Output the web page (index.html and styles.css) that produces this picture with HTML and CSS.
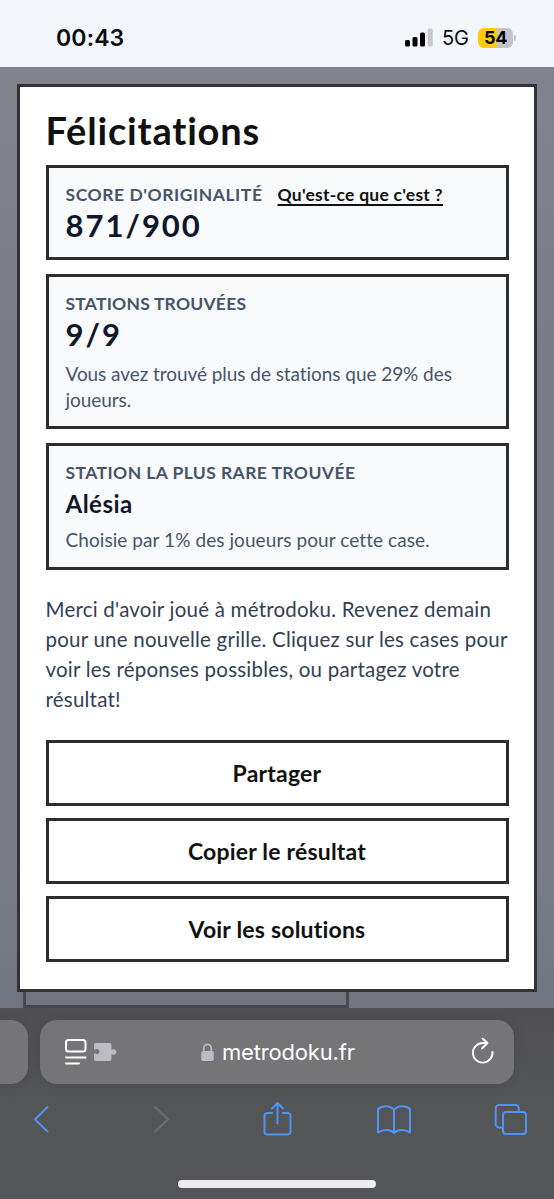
FILE: index.html
```html
<!DOCTYPE html>
<html lang="fr">
<head>
    <meta charset="UTF-8">
    <meta name="viewport" content="width=device-width, initial-scale=1.0">
    <title>métrodoku</title>
    <link rel="stylesheet" href="styles.css">
</head>
<body>
    <header class="status-bar">
        <span class="time">00:43</span>
        <div class="status-icons">
            <svg class="signal" width="28" height="20" viewBox="0 0 28 20">
                <rect x="0" y="12" width="5" height="6.500" rx="1.500"/>
                <rect x="7.500" y="9" width="5" height="9.500" rx="1.500"/>
                <rect x="15" y="4.500" width="5" height="14" rx="1.500"/>
                <rect x="22.700" y="0.500" width="5" height="18" rx="1.500" fill="#c6c8cc"/>
            </svg>
            <span class="network">5G</span>
            <span class="battery">54</span>
        </div>
    </header>

    <main class="page">
        <section class="modal">
            <h1>Félicitations</h1>

            <div class="card">
                <div class="label-row">
                    <span class="label label-score">Score d'originalité</span>
                    <a href="#" class="help">Qu'est-ce que c'est ?</a>
                </div>
                <div class="value">871/900</div>
            </div>

            <div class="card">
                <div class="label label-found">Stations trouvées</div>
                <div class="value">9/9</div>
                <p class="detail">Vous avez trouvé plus de stations que 29% des<br>joueurs.</p>
            </div>

            <div class="card">
                <div class="label">Station la plus rare trouvée</div>
                <div class="value station">Alésia</div>
                <p class="detail detail-rare">Choisie par 1% des joueurs pour cette case.</p>
            </div>

            <p class="thanks">Merci d'avoir joué à métrodoku. Revenez demain<br>pour une nouvelle grille. Cliquez sur les cases pour<br>voir les réponses possibles, ou partagez votre<br>résultat!</p>

            <div class="actions">
                <button>Partager</button>
                <button>Copier le résultat</button>
                <button>Voir les solutions</button>
            </div>
        </section>
        <div class="grid-edge"></div>
    </main>

    <footer class="browser">
        <div class="tabs">
            <div class="tab tab-previous"></div>
            <div class="tab address-bar">
                <svg width="56" height="30" viewBox="0 0 56 30">
                    <g fill="none" stroke="#fff" stroke-width="2" stroke-linecap="round">
                        <rect x="3" y="3" width="19.500" height="11.500" rx="2.500"/>
                        <path d="M3 20.500h19.500M3 26.500h13"/>
                    </g>
                    <path fill="#bdbcc4" d="M33 6h13.500a2 2 0 0 1 2 2v4.500q.4.500 1 .1a2.700 2.700 0 1 1 0 4.800q-.6-.4-1 .1V22a2 2 0 0 1-2 2H33a2 2 0 0 1-2-2v-5q.7-1 1.500-.4a2.500 2.500 0 1 0 0-4q-.8.600-1.500-.4V8a2 2 0 0 1 2-2z"/>
                </svg>
                <div class="address">
                    <svg width="13" height="19" viewBox="0 0 13 19">
                        <path d="M2.700 9V5.200a3.800 3.800 0 0 1 7.600 0V9" fill="none" stroke="#bdbcc4" stroke-width="1.700"/>
                        <rect x="0.300" y="8" width="12.400" height="10" rx="1.800" fill="#bdbcc4"/>
                    </svg>
                    <span>metrodoku.fr</span>
                </div>
                <svg width="26" height="30" viewBox="0 0 26 30">
                    <g fill="none" stroke="#fff" stroke-width="1.900" stroke-linecap="round" stroke-linejoin="round">
                        <path d="M17 6H12.500A9.800 9.800 0 1 0 22.500 15"/>
                        <path d="M12.500 1.500l5 4.500-5.500 5.500"/>
                    </g>
                </svg>
            </div>
        </div>

        <nav class="toolbar">
            <svg width="34" height="36" viewBox="0 0 34 36">
                <path d="M23.500 7L11 19.500l12.500 12"/>
            </svg>
            <svg class="disabled" width="34" height="36" viewBox="0 0 34 36">
                <path d="M13 7l13 12.500-13 12"/>
            </svg>
            <svg width="34" height="36" viewBox="0 0 34 36">
                <path d="M13 13H8.500a3 3 0 0 0-3 3v15.500a3 3 0 0 0 3 3h20a3 3 0 0 0 3-3V16a3 3 0 0 0-3-3H24M18.500 23.500V3.500M13 8.500L18.500 3 24 8.500"/>
            </svg>
            <svg width="34" height="36" viewBox="0 0 34 36">
                <path d="M17 10C13.500 5.500 5 5 1 9.200V32.500c4.500-3.500 12.500-3.500 16 .2 3.500-3.700 11.500-3.700 16-.2V9.200C29 5 20.500 5.500 17 10zV32.500"/>
            </svg>
            <svg width="34" height="36" viewBox="0 0 34 36">
                <rect x="9" y="12" width="23" height="22" rx="3"/>
                <path d="M8.500 27.500H5A3.300 3.300 0 0 1 1.700 24V8.300A3.300 3.300 0 0 1 5 5h16.500A3.300 3.300 0 0 1 24.800 8.300V11.500"/>
            </svg>
        </nav>

        <div class="home-indicator"></div>
    </footer>
</body>
</html>
```
FILE: styles.css
```css
* {
    margin: 0;
    padding: 0;
    box-sizing: border-box;
}

body {
    width: 554px;
    height: 1199px;
    overflow: hidden;
    display: flex;
    flex-direction: column;
    font-family: Lato, "Liberation Sans", sans-serif;
    font-variant-ligatures: none;
    color: #111;
}

.status-bar {
    height: 67px;
    padding: 8px 41px 0 56px;
    display: flex;
    justify-content: space-between;
    align-items: center;
    background-color: #f3f7fc;
    color: #0c0d10;
    font-family: Inter, sans-serif;
}

.time {
    font-size: 23px;
    font-weight: 600;
    letter-spacing: 0.15px;
}

.status-icons {
    display: flex;
    align-items: center;
}

.network {
    margin: 0 9px 0 9px;
    font-size: 20px;
}

.battery {
    position: relative;
    width: 35px;
    height: 20px;
    border-radius: 6px;
    background: linear-gradient(to right, #fdcb0b 54%, #c3c4c9 54%);
    color: #000;
    font-size: 18px;
    font-weight: 700;
    line-height: 20px;
    letter-spacing: -0.3px;
    text-align: center;
}

.battery::after {
    content: "";
    position: absolute;
    right: -3px;
    top: 7px;
    width: 2px;
    height: 6px;
    border-radius: 0 2px 2px 0;
    background-color: #c3c4c9;
}

.page {
    height: 941px;
    padding: 17px 17px 0;
    background: linear-gradient(to bottom, #81848e, #7a7d87 30%, #7a7d87 85%, #707681);
}

.modal {
    height: 908px;
    padding: 20px 25.5px 0;
    border: 3px solid #333335;
    background-color: #fff;
}

h1 {
    height: 46px;
    margin-bottom: 12px;
    font-size: 38px;
    font-weight: 700;
    line-height: 47px;
    letter-spacing: 0.8px;
    white-space: nowrap;
}

.card {
    padding: 14px 17px;
    margin-bottom: 14px;
    border: 3px solid #2d2d2e;
    background-color: #f8fafc;
    white-space: nowrap;
}

.card:first-of-type {
    padding-bottom: 13px;
}

.label-row {
    display: flex;
    gap: 15px;
}

.label {
    height: 24px;
    font-size: 17.5px;
    font-weight: 700;
    line-height: 25px;
    letter-spacing: 0.42px;
    text-transform: uppercase;
    color: #475569;
}

.label-score {
    letter-spacing: 0.55px;
}

.label-found {
    letter-spacing: 0.22px;
}

.help {
    height: 24px;
    font-size: 17.5px;
    font-weight: 700;
    line-height: 25px;
    letter-spacing: 0.25px;
    color: #111;
    text-underline-offset: 3px;
    text-decoration-thickness: 1.5px;
}

.value {
    font-size: 31px;
    font-weight: 700;
    line-height: 38px;
    letter-spacing: 2px;
    color: #0f172a;
}

.station {
    font-size: 24px;
    line-height: 39px;
    margin-bottom: -1px;
    letter-spacing: 0.5px;
}

.detail {
    padding-top: 8px;
    margin-bottom: -1px;
    font-size: 19px;
    line-height: 26px;
    letter-spacing: -0.06px;
    color: #475569;
}

.detail-rare {
    padding-top: 5px;
    margin-bottom: 0;
    letter-spacing: 0.07px;
}

.thanks {
    margin: 23.5px 0 26.5px;
    font-size: 20.5px;
    line-height: 30px;
    letter-spacing: 0.22px;
    color: #334155;
    white-space: nowrap;
}

.actions {
    display: flex;
    flex-direction: column;
    gap: 12px;
}

button {
    height: 66px;
    border: 3px solid #2d2d2e;
    background-color: #fff;
    color: #111;
    font-family: inherit;
    font-size: 23px;
    font-weight: 700;
    letter-spacing: 0.2px;
    font-variant-ligatures: none;
}

/* bottom of the game grid, showing behind the modal */
.grid-edge {
    width: 326px;
    height: 16px;
    margin-left: 6px;
    border: 3px solid #454753;
    border-top: none;
}

.browser {
    height: 191px;
    padding-top: 12px;
    background: linear-gradient(to bottom, #505052, #545557 50%);
}

.tabs {
    display: flex;
    gap: 12px;
}

.tab {
    height: 64px;
    border-radius: 17px;
    background-color: #757577;
    box-shadow: 0 2px 14px rgba(0, 0, 0, 0.1);
}

.tab-previous {
    width: 28px;
    border-radius: 0 17px 17px 0;
}

.address-bar {
    width: 474px;
    padding: 0 18px 0 23px;
    display: grid;
    grid-template-columns: 56px 1fr 26px;
    align-items: center;
}

.address {
    display: flex;
    align-items: center;
    gap: 8px;
    padding-left: 82px;
    color: #fff;
    font-family: Inter, sans-serif;
    font-size: 22px;
    letter-spacing: -0.18px;
}

.toolbar {
    display: flex;
    justify-content: space-between;
    padding: 16px 26px 0 24px;
}

.toolbar svg {
    overflow: visible;
    fill: none;
    stroke: #4f94f5;
    stroke-width: 2;
    stroke-linecap: round;
    stroke-linejoin: round;
}

.toolbar .disabled {
    stroke: #6d6d6f;
}

.home-indicator {
    width: 198px;
    height: 8px;
    margin: 44px 0 0 178px;
    border-radius: 4px;
    background-color: #eeecef;
}
```
